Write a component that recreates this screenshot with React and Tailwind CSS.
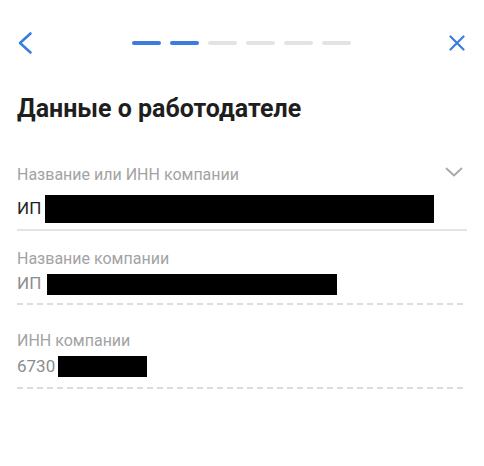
import React from 'react';

const steps = [true, true, false, false, false, false];

const dashed = 'h-[2px] bg-[repeating-linear-gradient(90deg,#dcdcdc_0_6px,transparent_6px_10px)]';

export default function App() {
  return (
    <div className="min-h-[466px] w-[484px] bg-white pt-[30px] font-['Roboto',sans-serif]">
      {/* top bar */}
      <div className="flex h-[26px] items-center justify-between pl-[17px] pr-[19px]">
        <svg width="16" height="24" viewBox="0 0 16 24" fill="none">
          <polyline points="13.5,2.5 3,12 13.5,21.5" stroke="#3b7ddf" strokeWidth="2.6" strokeLinecap="round" strokeLinejoin="round" />
        </svg>
        <div className="flex gap-[9px]">
          {steps.map((on, i) => (
            <div key={i} className={`h-[4px] w-[29px] rounded-full ${on ? 'bg-[#3b7ddf]' : 'bg-[#e3e3e3]'}`} />
          ))}
        </div>
        <svg width="16" height="16" viewBox="0 0 16 16" fill="none">
          <path d="M1.5 1.5 L14.5 14.5 M14.5 1.5 L1.5 14.5" stroke="#3b7ddf" strokeWidth="2.2" strokeLinecap="round" />
        </svg>
      </div>

      <div className="px-[17px]">
        <h1 className="mt-[38px] text-[25px] font-bold leading-[30px] text-[#1e1e1e]">Данные о работодателе</h1>

        {/* editable field */}
        <div className="relative mt-[42px]">
          <div className="text-[16px] leading-[18px] text-[#a3a3a3]">Название или ИНН компании</div>
          <svg className="absolute right-[4px] top-[1px]" width="18" height="10" viewBox="0 0 18 10" fill="none">
            <polyline points="1.5,1.5 9,8.5 16.5,1.5" stroke="#a8a8a8" strokeWidth="1.8" strokeLinecap="round" strokeLinejoin="round" />
          </svg>
          <div className="mt-[11px] flex h-[28px] items-center">
            <span className="w-[28px] text-[17px] text-[#222]">ИП</span>
            <div className="h-[28px] w-[389px] bg-black" />
          </div>
          <div className="mt-[6px] h-[2px] bg-[#e4e4e4]" />
        </div>

        <div className="mt-[19px]">
          <div className="text-[16px] leading-[18px] text-[#a3a3a3]">Название компании</div>
          <div className="mt-[6px] flex h-[20px] items-center">
            <span className="w-[30px] text-[17px] text-[#8c8c8c]">ИП</span>
            <div className="h-[21px] w-[290px] bg-black" />
          </div>
          <div className={`mt-[9px] ${dashed}`} />
        </div>

        <div className="mt-[27px]">
          <div className="text-[16px] leading-[18px] text-[#a3a3a3]">ИНН компании</div>
          <div className="mt-[6px] flex h-[21px] items-center">
            <span className="w-[41px] text-[17px] text-[#8c8c8c]">6730</span>
            <div className="h-[21px] w-[89px] bg-black" />
          </div>
          <div className={`mt-[10px] ${dashed}`} />
        </div>
      </div>
    </div>
  );
}
